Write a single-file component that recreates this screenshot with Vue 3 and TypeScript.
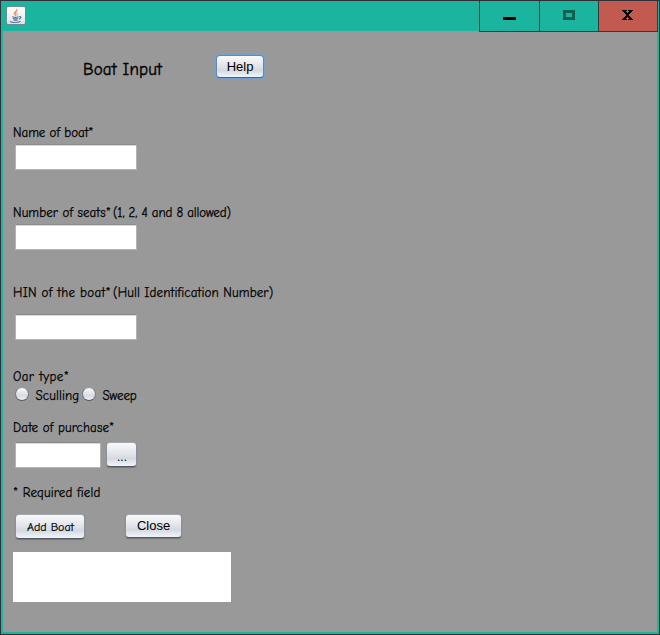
<script setup lang="ts">
import { ref } from 'vue'

const boatName = ref('')
const seats = ref('')
const hin = ref('')
const oarType = ref('')
const purchaseDate = ref('')
</script>

<template>
  <div class="window">
    <header class="titlebar">
      <span class="app-icon">
        <svg width="16" height="16" viewBox="0 0 16 16" fill="none">
          <path d="M8.8 0.8C9.6 2.7 5.6 3.8 6.2 5.7C6.5 6.7 7.5 7.1 7.7 8C8.3 6.9 7.2 6.2 7.5 5.2C8 3.8 10 2.7 8.8.8Z" fill="#e58b3d" stroke="#e58b3d" stroke-width=".5" />
          <path d="M10.4 3.8C8.4 4.8 8.1 5.6 8.8 6.5C9.2 7.1 9 7.6 8.6 8C10.3 7 9.9 6.4 9.3 5.8C8.9 5.2 9.5 4.6 10.4 3.8Z" fill="#e58b3d" />
          <path d="M4.2 8.8Q7.5 9.9 10.6 8.8M5 10.4Q7.5 11.5 10 10.5M5.6 12Q7.5 12.8 9.6 12M11 8.7C13.8 8 13.3 10.4 10.9 11.1M2.4 13.1C1.4 14.8 10.5 15 12.5 13.3" stroke="#5b7d9b" stroke-width="1.2" />
        </svg>
      </span>
      <div class="controls">
        <button class="control" aria-label="Minimize"><i class="minimize"></i></button>
        <button class="control" aria-label="Maximize"><i class="maximize"></i></button>
        <button class="control close" aria-label="Close window">
          <svg width="11" height="10" viewBox="0 0 11 10" shape-rendering="crispEdges">
            <path d="M0 0H5V1H4V2H5V3H6V2H7V1H6V0H11V1H10V2H9V3H8V4H7V6H8V7H9V8H10V9H11V10H6V9H7V8H6V7H5V8H4V9H5V10H0V9H1V8H2V7H3V6H4V4H3V3H2V2H1V1H0Z" />
          </svg>
        </button>
      </div>
    </header>

    <main class="panel">
      <div class="heading">
        <h1>Boat Input</h1>
        <button class="btn help">Help</button>
      </div>
      <section class="group">
        <label class="w-name" for="name">Name of boat*</label>
        <input id="name" v-model="boatName" class="field" />
      </section>
      <section class="group">
        <div class="line">
          <label class="w-seats" for="seats">Number of seats*</label><span class="w-allowed">(1, 2, 4 and 8 allowed)</span>
        </div>
        <input id="seats" v-model="seats" class="field" />
      </section>
      <section class="group hin">
        <div class="line">
          <label class="w-hin" for="hin">HIN of the boat*</label><span class="w-hull">(Hull Identification Number)</span>
        </div>
        <input id="hin" v-model="hin" class="field" />
      </section>
      <section class="oars">
        <span class="label w-oar">Oar type*</span>
        <div class="radios">
          <label class="radio"><input v-model="oarType" type="radio" value="sculling" /><span class="w-scull">Sculling</span></label>
          <label class="radio"><input v-model="oarType" type="radio" value="sweep" /><span class="w-sweep">Sweep</span></label>
        </div>
      </section>
      <section class="date">
        <label class="w-date" for="date">Date of purchase*</label>
        <div class="date-row">
          <input id="date" v-model="purchaseDate" class="field short" />
          <button class="btn more">...</button>
        </div>
      </section>
      <p class="required">* Required field</p>
      <div class="actions">
        <button class="btn add">Add Boat</button>
        <button class="btn dismiss">Close</button>
      </div>
      <div class="output"></div>
    </main>
  </div>
</template>

<style>
body {
  margin: 0;
  overflow: hidden;
}
</style>

<style scoped>
* {
  box-sizing: border-box;
}
.window {
  display: flex;
  flex-direction: column;
  width: 660px;
  height: 635px;
  padding: 0 2px 2px;
  border: 1px solid #302f37;
  background: #1bb59f;
  color: #000;
  font: 13px/18px "Comic Sans MS", "Comic Neue", Lato, sans-serif;
  -webkit-text-stroke: 0.25px #000;
}
.titlebar {
  display: flex;
  justify-content: space-between;
  height: 30px;
  flex: none;
}
.app-icon {
  display: flex;
  align-items: center;
  justify-content: center;
  width: 20px;
  height: 19px;
  margin: 5px 0 0 3px;
  border: 1px solid #668f96;
  border-radius: 2px;
  background: linear-gradient(#fff, #dfe3e8);
}
.controls {
  display: flex;
  height: 31px;
  margin-right: -1px;
  border: solid #263f40;
  border-width: 0 1px 1px;
  position: relative;
}
.control {
  display: flex;
  justify-content: center;
  width: 60px;
  padding: 0;
  border: 0;
  border-right: 1px solid #263f40;
  background: #1bb59f;
}
.control:nth-child(2) {
  width: 59px;
}
.control.close {
  width: 58px;
  border-right: 0;
  background: #c35a50;
}
.close svg {
  margin: 9px 1px 0 0;
}
.minimize {
  width: 13px;
  height: 3px;
  margin-top: 16px;
  background: #000;
}
.maximize {
  width: 12px;
  height: 10px;
  margin-top: 9px;
  border: 3px solid #126054;
}
.panel {
  flex: 1;
  padding: 23px 10px 0;
  background: #999;
}
.heading {
  display: flex;
  height: 70px;
}
h1 {
  width: 132px;
  margin: 5px 0 0 70px;
  font-size: 17px;
  line-height: 21px;
  font-weight: 400;
  letter-spacing: 0.15px;
  white-space: nowrap;
  -webkit-text-stroke-width: 0.4px;
}
.group {
  height: 80px;
}
.group.hin {
  height: 84px;
}
label,
.label,
.line {
  display: block;
  height: 16px;
  white-space: nowrap;
}
.line {
  display: flex;
}
.line label {
  width: 100px;
}
.w-name {
  letter-spacing: -0.05px;
}
.w-seats {
  letter-spacing: 0.08px;
}
.w-allowed {
  letter-spacing: -0.13px;
}
.w-hin {
  letter-spacing: 0.3px;
}
.w-hull {
  letter-spacing: 0.13px;
}
.w-oar {
  letter-spacing: 0.4px;
}
.w-scull,
.w-date,
.required {
  letter-spacing: 0.13px;
}
.w-sweep {
  letter-spacing: -0.1px;
}
.field {
  display: block;
  width: 122px;
  height: 26px;
  margin: 4px 0 0 2px;
  padding: 2px 5px;
  border: 1px solid #b3b3b3;
  border-top-color: #8b8b8b;
  border-radius: 0;
  outline: 0;
  background: #fff;
  box-shadow: inset 0 1px #d8d8d8;
}
.hin .field {
  margin-top: 14px;
}
.oars {
  height: 51px;
}
.radios {
  display: flex;
  height: 18px;
  margin-top: 2px;
}
.radio {
  display: flex;
  width: 67px;
  padding-left: 2px;
}
.radio input {
  flex: none;
  width: 14px;
  height: 14px;
  margin: 1px 6.5px 0 0;
  appearance: none;
  border: 1px solid #777c84;
  border-top-color: #9a9da3;
  border-bottom-color: #555b65;
  border-radius: 50%;
  background: linear-gradient(#fbfbfc, #d7dae1 65%, #f0f2f7);
}
.radio span {
  padding-top: 1px;
}
.radio input:checked {
  background: radial-gradient(circle, #222 30%, #e4e6eb 36%);
}
.date {
  height: 65px;
}
.date-row {
  display: flex;
  margin-top: 7px;
}
.date-row .field {
  margin-top: 0;
}
.field.short {
  width: 86px;
}
.btn {
  flex: none;
  height: 25px;
  padding: 0;
  border: 1px solid #8c929c;
  border-top-color: #a3a7ae;
  border-bottom-color: #505761;
  border-radius: 4px;
  color: #000;
  font: 13px/22px "Liberation Sans", Arial, sans-serif;
  -webkit-text-stroke: 0;
  background: linear-gradient(#fafafc, #e3e5ea 45%, #d4d8e1 68%, #f2f5fb);
  box-shadow: 0 1px 1px rgb(50 55 65 / 35%);
  white-space: nowrap;
}
.help {
  width: 48px;
  height: 23px;
  margin: 1px 0 0 1px;
  border-color: #6489b0;
  border-bottom-color: #45617f;
  line-height: 21px;
  box-shadow: 0 0 0 1.5px #72a0cf;
}
.more {
  width: 31px;
  margin-left: 5px;
  font-size: 12px;
  line-height: 24px;
  padding: 2px 0 0 1px;
}
.required {
  height: 30px;
  margin: 0;
}
.actions {
  display: flex;
  height: 38px;
}
.add {
  width: 70px;
  height: 25px;
  margin-left: 2px;
  padding: 1px 0 0 1px;
  font: 12px/22px "Comic Sans MS", "Comic Neue", Lato, sans-serif;
  -webkit-text-stroke: 0.2px #000;
}
.dismiss {
  width: 57px;
  height: 24px;
  margin-left: 40px;
  line-height: 22px;
}
.output {
  width: 218px;
  height: 50px;
  background: #fff;
}
</style>
